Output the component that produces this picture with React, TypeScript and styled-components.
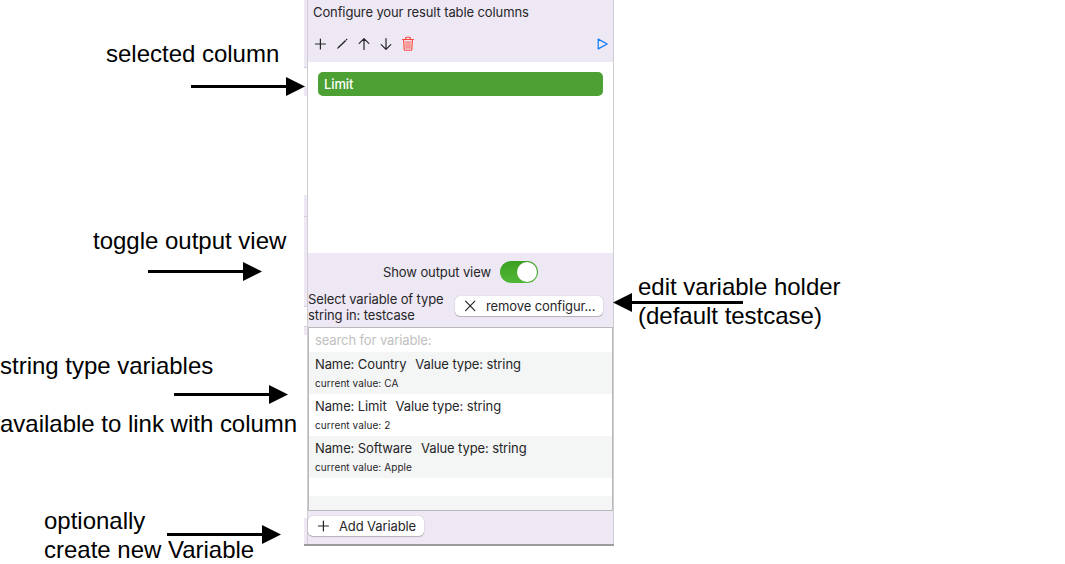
import React, { useState } from "react";
import styled, { createGlobalStyle } from "styled-components";

const LILAC = "#eee8f4";
const INK = "#262628";

const GlobalStyle = createGlobalStyle`
  *, *::before, *::after { box-sizing: border-box; }
  body {
    margin: 0;
    background: #fff;
    color: ${INK};
    font-family: Inter, "Liberation Sans", sans-serif;
    font-size: 13px;
    line-height: 16px;
    letter-spacing: -0.11px;
    overflow: hidden;
  }
`;

const Page = styled.main`
  position: relative;
  display: flex;
  width: 1065px;
  height: 564px;
  padding-left: 304px;
  overflow: hidden;
`;

const Figure = styled.div`
  display: flex;
  width: 310px;
  height: 546px;
  border-bottom: 2px solid #9b9a9d;
`;

const Edge = styled.div`
  display: flex;
  flex-direction: column;
  width: 3px;
`;

const EdgePart = styled.div<{ $h: number; $filled?: boolean; $line?: boolean }>`
  height: ${(p) => p.$h}px;
  background: ${(p) => (p.$filled ? LILAC : "#fff")};
  border-bottom: ${(p) => (p.$line ? "1px solid #d2ced6" : "none")};
`;

const Panel = styled.section`
  display: flex;
  flex-direction: column;
  width: 307px;
  background: ${LILAC};
  border: solid #cfccd2;
  border-width: 0 1px;
`;

const Title = styled.h1`
  margin: 0;
  padding: 4px 0 0 5px;
  height: 26px;
  font-size: 13px;
  font-weight: 400;
  line-height: 16px;
  white-space: nowrap;
`;

const Toolbar = styled.div`
  display: flex;
  align-items: center;
  height: 36px;
  padding: 0 3px 0 4px;
`;

const ToolButton = styled.button<{ $color?: string; $end?: boolean }>`
  display: flex;
  align-items: center;
  justify-content: center;
  width: 16px;
  height: 18px;
  margin: 0 6px 0 0;
  margin-left: ${(p) => (p.$end ? "auto" : "0")};
  ${(p) => p.$end && "margin-right: 0;"}
  padding: 0;
  border: 0;
  background: none;
  color: ${(p) => p.$color ?? INK};
`;

const Columns = styled.div`
  height: 191px;
  padding: 10px;
  background: #fff;
`;

const ColumnItem = styled.div`
  height: 24px;
  padding-left: 6px;
  border-radius: 5px;
  background: #4ca034;
  color: #fff;
  font-weight: 500;
  line-height: 24px;
`;

const ToggleRow = styled.label`
  display: flex;
  align-items: center;
  justify-content: center;
  gap: 9px;
  height: 38px;
  white-space: nowrap;
`;

const Switch = styled.button<{ $on: boolean }>`
  display: flex;
  justify-content: ${(p) => (p.$on ? "flex-end" : "flex-start")};
  width: 38px;
  height: 22px;
  padding: 1px;
  border: 0;
  border-radius: 11px;
  background: ${(p) => (p.$on ? "linear-gradient(#3c9f20, #52b737)" : "#c8c8c8")};
`;

const Knob = styled.span`
  width: 20px;
  height: 20px;
  border-radius: 50%;
  background: #fff;
`;

const HolderRow = styled.div`
  display: flex;
  justify-content: space-between;
  height: 36px;
  padding-right: 10px;
`;

const HolderLabel = styled.p`
  margin: 0;
  width: 140px;
  white-space: nowrap;
`;

const PushButton = styled.button<{ $width: number; $gap: number }>`
  display: flex;
  align-items: center;
  gap: ${(p) => p.$gap}px;
  width: ${(p) => p.$width}px;
  height: 20px;
  padding: 0 7px;
  border: 0;
  border-radius: 5px;
  background: #fff;
  box-shadow: 0 0 1px rgba(0, 0, 0, 0.3), 0 1px 1px rgba(0, 0, 0, 0.22);
  color: ${INK};
  font: inherit;
  letter-spacing: inherit;
  white-space: nowrap;
`;

const ButtonText = styled.span`
  height: 17px;
  line-height: 16px;
`;

const HolderAction = styled.div`
  padding-top: 5px;
`;

const VariableList = styled.div`
  display: flex;
  flex-direction: column;
  height: 184px;
  border: 1px solid #b9b8bb;
  background: #fff;
`;

const Search = styled.input`
  height: 24px;
  padding: 0 6px;
  border: 0;
  background: #fff;
  font: inherit;
  letter-spacing: inherit;
  outline: none;
  &::placeholder { color: #bfbfc0; opacity: 1; }
`;

const VariableRow = styled.div<{ $striped: boolean }>`
  height: 42px;
  padding: 4px 6px 0;
  background: ${(p) => (p.$striped ? "#f4f5f5" : "#fff")};
`;

const VariableHead = styled.div`
  display: flex;
  gap: 9px;
  height: 16px;
  white-space: nowrap;
`;

const CurrentValue = styled.div`
  padding-top: 5px;
  font-size: 10px;
  line-height: 13px;
  letter-spacing: 0.08px;
`;

const EmptyRow = styled.div<{ $h: number; $striped?: boolean }>`
  height: ${(p) => p.$h}px;
  background: ${(p) => (p.$striped ? "#f4f5f5" : "#fff")};
`;

const Footer = styled.footer`
  padding: 5px 0 0;
`;

const Note = styled.div<{ $x: number; $y: number; $leading?: number }>`
  position: absolute;
  left: ${(p) => p.$x}px;
  top: ${(p) => p.$y}px;
  color: #000;
  font: 24px/${(p) => p.$leading ?? 29}px "Liberation Sans", Arial, sans-serif;
  letter-spacing: -0.01px;
  white-space: pre;
`;

const ArrowSvg = styled.svg<{ $x: number; $y: number }>`
  position: absolute;
  left: ${(p) => p.$x}px;
  top: ${(p) => p.$y}px;
`;

type ArrowProps = { x: number; y: number; length: number; left?: boolean };

const Arrow = ({ x, y, length, left }: ArrowProps) => (
  <ArrowSvg $x={x} $y={y} width={length} height={21} viewBox={`0 0 ${length} 21`}>
    <g transform={left ? `translate(${length} 0) scale(-1 1)` : undefined}>
      <path d={`M0 9H${length - 18}V12H0z`} />
      <path d={`M${length - 19} 1.1L${length} 10.5L${length - 19} 19.9z`} />
    </g>
  </ArrowSvg>
);

type GlyphProps = { d: string; width?: number };

const Glyph = ({ d, width = 1.2 }: GlyphProps) => (
  <svg width={16} height={16} viewBox="0 0 16 16" fill="none" stroke="currentColor"
    strokeWidth={width} strokeLinecap="round" strokeLinejoin="round">
    <path d={d} />
  </svg>
);

const PLUS = "M8.4 3V13M3.4 8H13.4";
const UP = "M8 13.4V2.8M3.2 7.4L8 2.6L12.8 7.4";
const DOWN = "M8 2.6V13.2M3.2 8.6L8 13.4L12.8 8.6";
const CROSS = "M3.6 3.2L12.8 12.6M12.8 3.2L3.6 12.6";
const PLAY = "M4.2 3.1V12.9L13.2 8z";

const Pencil = () => (
  <svg width="16" height="16" viewBox="0 0 16 16" fill="currentColor">
    <path d="M2.9 13.1L3.9 10.9L11.2 3.9L12.2 4.9L4.9 11.9zM11.7 3.4L12.3 2.8Q12.8 2.5 13.2 2.9T13.3 3.9L12.7 4.4z" />
  </svg>
);

const Trash = () => (
  <svg width="16" height="18" viewBox="0 0 16 18" fill="none" stroke="currentColor"
    strokeWidth="1.1" strokeLinecap="round" strokeLinejoin="round">
    <path d="M2.5 4.5H13.5M5.7 4.2V3Q5.7 2.3 6.5 2.3H9.5Q10.3 2.3 10.3 3V4.2M3.6 4.7L4.2 14.4Q4.3 15.3 5.2 15.3H10.8Q11.7 15.3 11.8 14.4L12.4 4.7" />
    <path d="M5.9 6.4L6.2 13.4M8 6.4V13.4M10.1 6.4L9.8 13.4" strokeWidth="0.9" />
  </svg>
);

const edgeParts = [
  { h: 68, filled: true, line: true },
  { h: 18 },
  { h: 10, filled: true },
  { h: 99 },
  { h: 22, filled: true, line: true },
  { h: 90, filled: true, line: true },
  { h: 20, line: true },
  { h: 8, filled: true },
  { h: 183 },
  { h: 26, filled: true },
];

const variables = [
  { name: "Country", value: "CA" },
  { name: "Limit", value: "2" },
  { name: "Software", value: "Apple" },
];

export default function App() {
  const [outputShown, setOutputShown] = useState(true);

  return (
    <>
      <GlobalStyle />
      <Page>
        <Figure>
          <Edge>
            {edgeParts.map((part, i) => (
              <EdgePart key={i} $h={part.h} $filled={part.filled} $line={part.line} />
            ))}
          </Edge>
          <Panel>
            <Title>Configure your result table columns</Title>
            <Toolbar>
              <ToolButton aria-label="Add"><Glyph d={PLUS} /></ToolButton>
              <ToolButton aria-label="Edit"><Pencil /></ToolButton>
              <ToolButton aria-label="Move up"><Glyph d={UP} /></ToolButton>
              <ToolButton aria-label="Move down"><Glyph d={DOWN} /></ToolButton>
              <ToolButton aria-label="Delete" $color="#ff4238"><Trash /></ToolButton>
              <ToolButton aria-label="Run" $color="#087cff" $end><Glyph d={PLAY} /></ToolButton>
            </Toolbar>
            <Columns>
              <ColumnItem>Limit</ColumnItem>
            </Columns>
            <ToggleRow>
              Show output view
              <Switch
                role="switch"
                aria-checked={outputShown}
                $on={outputShown}
                onClick={() => setOutputShown(!outputShown)}
              >
                <Knob />
              </Switch>
            </ToggleRow>
            <HolderRow>
              <HolderLabel>
                Select variable of type<br />string in: testcase
              </HolderLabel>
              <HolderAction>
                <PushButton $width={148} $gap={8}>
                  <Glyph d={CROSS} />
                  <ButtonText>remove configur...</ButtonText>
                </PushButton>
              </HolderAction>
            </HolderRow>
            <VariableList>
              <Search placeholder="search for variable:" />
              {variables.map((v, i) => (
                <VariableRow key={v.name} $striped={i % 2 === 0}>
                  <VariableHead>
                    <span>Name: {v.name}</span>
                    <span>Value type: string</span>
                  </VariableHead>
                  <CurrentValue>current value: {v.value}</CurrentValue>
                </VariableRow>
              ))}
              <EmptyRow $h={18} />
              <EmptyRow $h={14} $striped />
            </VariableList>
            <Footer>
              <PushButton $width={116} $gap={8}>
                <Glyph d={PLUS} />
                <ButtonText>Add Variable</ButtonText>
              </PushButton>
            </Footer>
          </Panel>
        </Figure>

        <Note $x={106} $y={39}>selected column</Note>
        <Arrow x={191} y={76} length={114} />
        <Note $x={93} $y={226}>toggle output view</Note>
        <Arrow x={148} y={261} length={114} />
        <Note $x={0} $y={337} $leading={58}>{"string type variables\navailable to link with column"}</Note>
        <Arrow x={174} y={384} length={114} />
        <Note $x={44} $y={506}>{"optionally\ncreate new Variable"}</Note>
        <Arrow x={167} y={524} length={114} />
        <Note $x={638} $y={272}>{"edit variable holder\n(default testcase)"}</Note>
        <Arrow x={613} y={292} length={130} left />
      </Page>
    </>
  );
}
